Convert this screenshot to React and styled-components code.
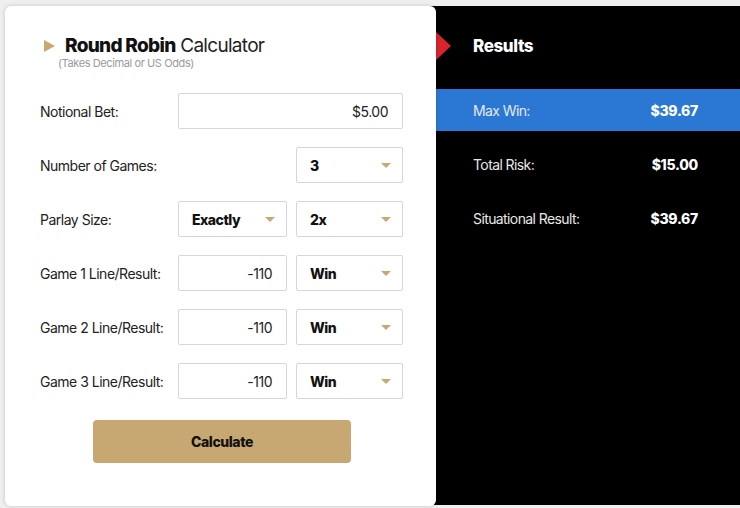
import React from "react";
import styled, { createGlobalStyle } from "styled-components";

const Global = createGlobalStyle`
  html, body { margin: 0; padding: 0; background: #efefef; }
  body { font-family: Inter, "Liberation Sans", sans-serif; }
  * { box-sizing: border-box; }
`;

const Page = styled.div`
  width: 740px;
  height: 508px;
  padding: 6px 0 2px 5px;
  display: flex;
`;

const Card = styled.section`
  position: relative;
  z-index: 1;
  width: 431px;
  height: 500px;
  background: #fff;
  border-radius: 6px;
  box-shadow: 0 0 4px rgba(0, 0, 0, 0.18);
  padding: 31px 0 0 35px;
  display: flex;
  flex-direction: column;
`;

const Header = styled.div`
  display: flex;
  flex-direction: column;
  padding-left: 4px;
`;

const TitleRow = styled.div`
  display: flex;
  align-items: center;
  gap: 10px;
`;

const GoldTriangle = styled.span`
  width: 0;
  height: 0;
  border-top: 6.5px solid transparent;
  border-bottom: 6.5px solid transparent;
  border-left: 11px solid #c8a872;
`;

const Title = styled.h1`
  margin: 0;
  font-size: 19px;
  line-height: 18px;
  font-weight: 400;
  color: #222;
  letter-spacing: -0.7px;
  b { font-weight: 800; color: #111; }
`;

const Subtitle = styled.div`
  margin: 3px 0 0 14px;
  font-size: 11px;
  line-height: 11px;
  color: #9a9a9a;
  letter-spacing: -0.4px;
`;

const Form = styled.div`
  margin-top: 24px;
  display: flex;
  flex-direction: column;
  gap: 18px;
`;

const Row = styled.div`
  display: grid;
  grid-template-columns: 129px 109px 107px;
  column-gap: 9px;
  align-items: center;
  height: 36px;
`;

const Label = styled.div`
  grid-column: 1;
  font-size: 14px;
  color: #222;
  letter-spacing: -0.5px;
  white-space: nowrap;
`;

const Box = styled.div`
  grid-column: ${(p) => p.$col};
  height: 36px;
  border: 1px solid #d6d6d6;
  border-radius: 2px;
  background: #fff;
  display: flex;
  align-items: center;
  font-size: 14px;
  color: #222;
  letter-spacing: -0.5px;
`;

const TextBox = styled(Box)`
  justify-content: flex-end;
  padding-right: 14px;
`;

const SelectBox = styled(Box)`
  justify-content: space-between;
  padding: 0 11px 0 13px;
  font-weight: 800;
  color: #111;
`;

const Caret = styled.span`
  width: 0;
  height: 0;
  border-left: 5px solid transparent;
  border-right: 5px solid transparent;
  border-top: 5px solid #c8a872;
`;

const ButtonWrap = styled.div`
  display: flex;
  padding-left: 53px;
  margin-top: 21px;
`;

const Button = styled.button`
  width: 258px;
  height: 43px;
  border: none;
  border-radius: 4px;
  background: #c8a872;
  font-family: inherit;
  font-size: 14px;
  font-weight: 800;
  color: #111;
  letter-spacing: -0.4px;
  cursor: pointer;
`;

const Panel = styled.section`
  position: relative;
  margin-left: -10px;
  flex: 1;
  height: 499px;
  background: #000;
  padding: 26px 0 0 10px;
  display: flex;
  flex-direction: column;
`;

const RedTriangle = styled.span`
  position: absolute;
  left: 10px;
  top: 26px;
  width: 0;
  height: 0;
  border-top: 14px solid transparent;
  border-bottom: 14px solid transparent;
  border-left: 15px solid #d9242f;
`;

const PanelTitle = styled.h2`
  margin: 0 0 0 37px;
  height: 28px;
  display: flex;
  align-items: center;
  font-size: 17px;
  font-weight: 800;
  color: #fff;
  letter-spacing: -0.4px;
`;

const ResultList = styled.div`
  margin-top: 29px;
  display: flex;
  flex-direction: column;
  gap: 12px;
`;

const ResultRow = styled.div`
  height: 42px;
  display: flex;
  align-items: center;
  justify-content: space-between;
  padding: 0 42px 0 37px;
  background: ${(p) => (p.$active ? "#2a78d4" : "transparent")};
`;

const ResultLabel = styled.span`
  font-size: 14px;
  color: #e8e8e8;
  letter-spacing: -0.6px;
`;

const ResultValue = styled.span`
  font-size: 14px;
  font-weight: 800;
  color: #fff;
  letter-spacing: -0.3px;
`;

const games = [1, 2, 3];

export default function App() {
  return (
    <>
      <Global />
      <Page>
        <Card>
          <Header>
            <TitleRow>
              <GoldTriangle />
              <Title>
                <b>Round Robin</b> Calculator
              </Title>
            </TitleRow>
            <Subtitle>(Takes Decimal or US Odds)</Subtitle>
          </Header>
          <Form>
            <Row>
              <Label>Notional Bet:</Label>
              <TextBox $col="2 / 4">$5.00</TextBox>
            </Row>
            <Row>
              <Label>Number of Games:</Label>
              <SelectBox $col="3">
                3<Caret />
              </SelectBox>
            </Row>
            <Row>
              <Label>Parlay Size:</Label>
              <SelectBox $col="2">
                Exactly<Caret />
              </SelectBox>
              <SelectBox $col="3">
                2x<Caret />
              </SelectBox>
            </Row>
            {games.map((g) => (
              <Row key={g}>
                <Label>Game {g} Line/Result:</Label>
                <TextBox $col="2">-110</TextBox>
                <SelectBox $col="3">
                  Win<Caret />
                </SelectBox>
              </Row>
            ))}
          </Form>
          <ButtonWrap>
            <Button>Calculate</Button>
          </ButtonWrap>
        </Card>
        <Panel>
          <RedTriangle />
          <PanelTitle>Results</PanelTitle>
          <ResultList>
            <ResultRow $active>
              <ResultLabel>Max Win:</ResultLabel>
              <ResultValue>$39.67</ResultValue>
            </ResultRow>
            <ResultRow>
              <ResultLabel>Total Risk:</ResultLabel>
              <ResultValue>$15.00</ResultValue>
            </ResultRow>
            <ResultRow>
              <ResultLabel>Situational Result:</ResultLabel>
              <ResultValue>$39.67</ResultValue>
            </ResultRow>
          </ResultList>
        </Panel>
      </Page>
    </>
  );
}
